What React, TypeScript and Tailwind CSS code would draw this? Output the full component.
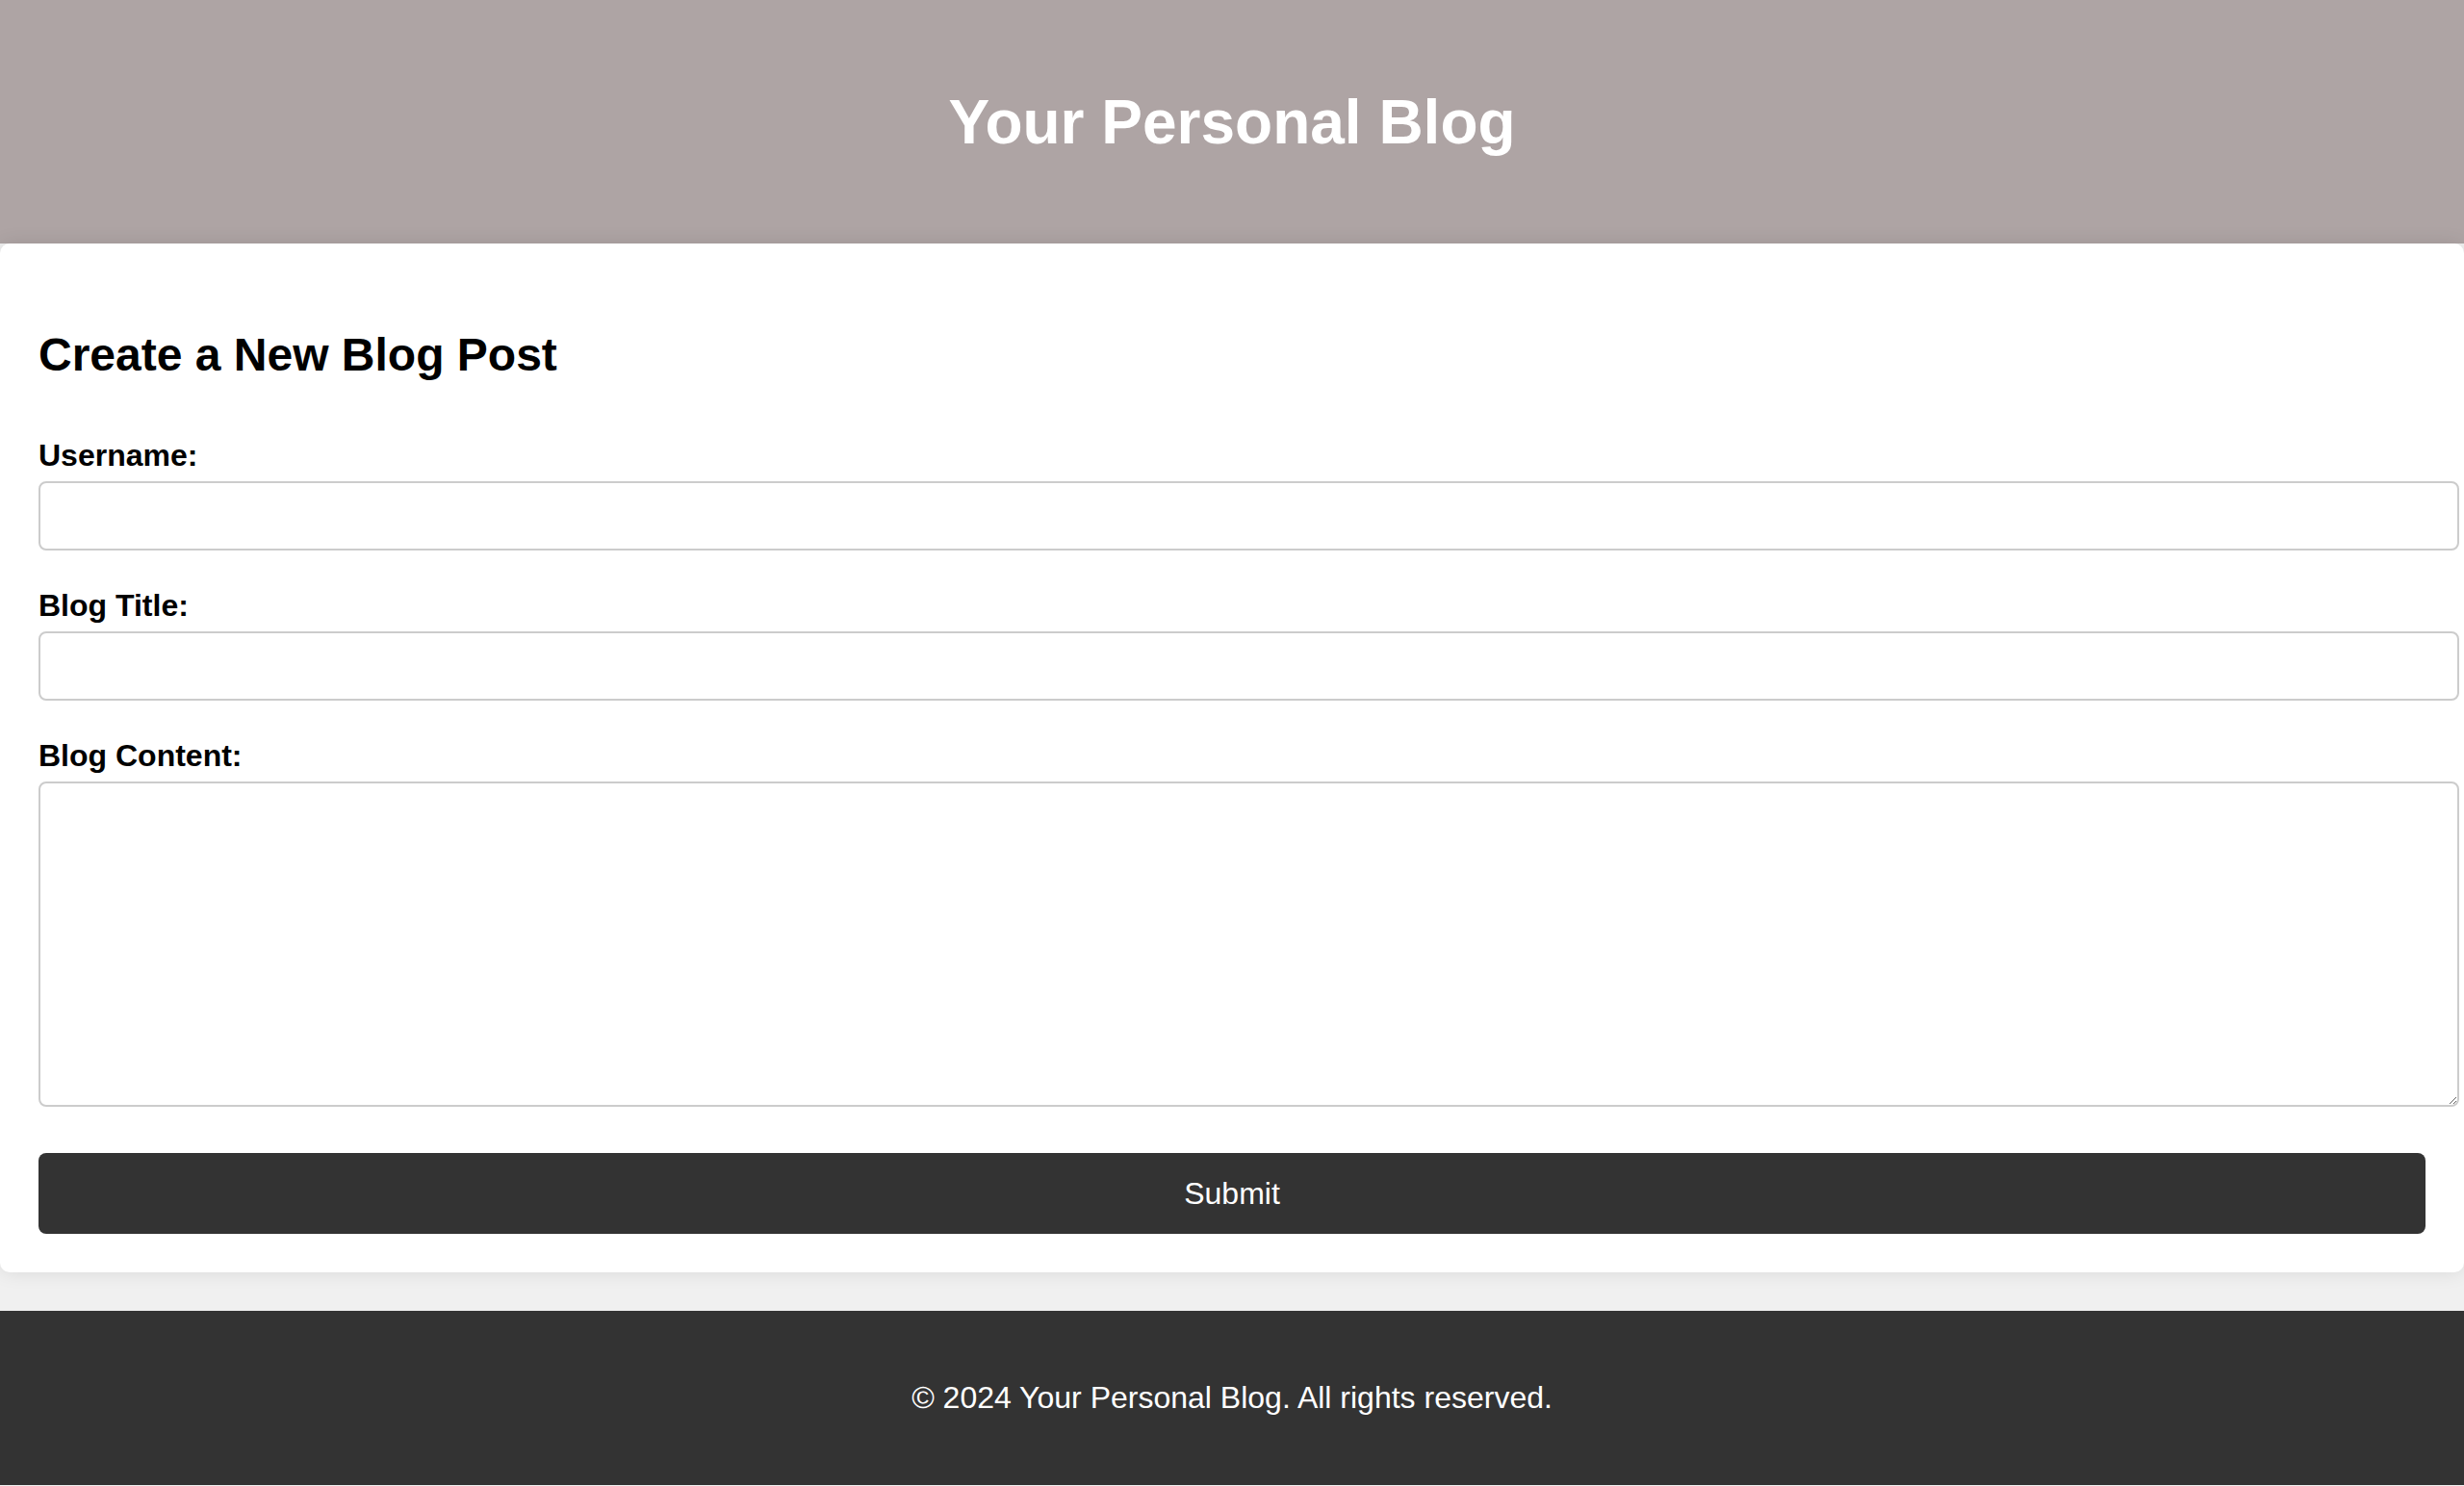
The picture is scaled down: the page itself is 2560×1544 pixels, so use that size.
export default function App() {
  return (
    <div className="min-h-screen bg-[#f0f0f0] font-['Liberation_Sans',Arial,sans-serif] text-black">
      <header className="bg-[#aea4a4] h-[253px] flex items-center justify-center">
        <h1 className="text-[64px] leading-[74px] font-bold text-white">Your Personal Blog</h1>
      </header>

      <main className="bg-white rounded-[10px] shadow-[0_0_20px_rgba(0,0,0,0.1)] px-10 pt-[88px] pb-10 relative">
        <h2 className="text-[48px] leading-[55px] font-bold mb-[59px]">Create a New Blog Post</h2>

        <form onSubmit={(e) => e.preventDefault()}>
          <div className="mb-[39px]">
            <label htmlFor="username" className="block text-[32px] leading-[37px] font-bold mb-2">
              Username:
            </label>
            <input
              id="username"
              type="text"
              className="block w-[calc(100%+35px)] h-[72px] px-4 text-[32px] border-2 border-[#cccccc] rounded-lg bg-white outline-none"
            />
          </div>

          <div className="mb-[39px]">
            <label htmlFor="title" className="block text-[32px] leading-[37px] font-bold mb-2">
              Blog Title:
            </label>
            <input
              id="title"
              type="text"
              className="block w-[calc(100%+35px)] h-[72px] px-4 text-[32px] border-2 border-[#cccccc] rounded-lg bg-white outline-none"
            />
          </div>

          <div className="mb-12">
            <label htmlFor="content" className="block text-[32px] leading-[37px] font-bold mb-2">
              Blog Content:
            </label>
            <textarea
              id="content"
              className="block w-[calc(100%+35px)] h-[338px] px-4 py-2 text-[32px] border-2 border-[#cccccc] rounded-lg bg-white outline-none"
            />
          </div>

          <button
            type="submit"
            className="w-full h-[84px] bg-[#333333] text-white text-[32px] rounded-lg"
          >
            Submit
          </button>
        </form>
      </main>

      <footer className="bg-[#333333] mt-10 h-[181px] flex items-center justify-center">
        <p className="text-white text-[32px] leading-[37px]">© 2024 Your Personal Blog. All rights reserved.</p>
      </footer>
    </div>
  );
}
